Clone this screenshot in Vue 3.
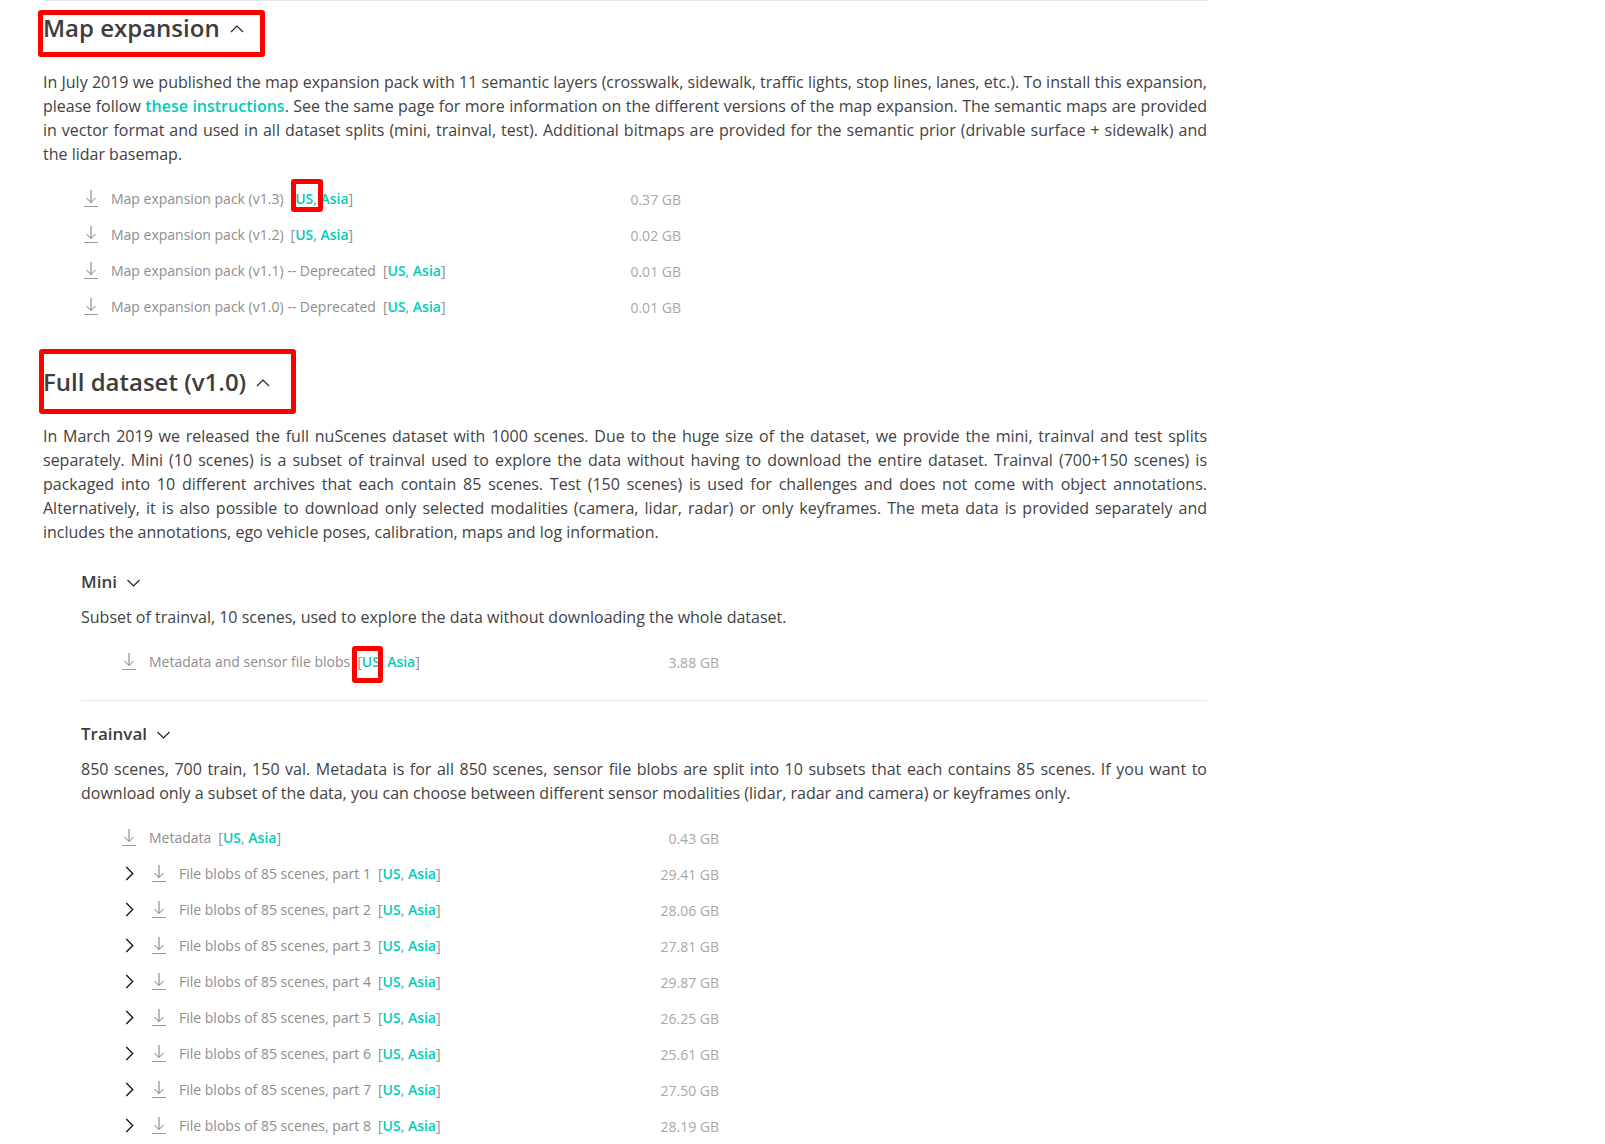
<script setup>
const mapRows = [
  { label: 'Map expansion pack (v1.3)', size: '0.37 GB', mark: true },
  { label: 'Map expansion pack (v1.2)', size: '0.02 GB' },
  { label: 'Map expansion pack (v1.1) -- Deprecated', size: '0.01 GB' },
  { label: 'Map expansion pack (v1.0) -- Deprecated', size: '0.01 GB' },
]
const sizes = ['29.41', '28.06', '27.81', '29.87', '26.25', '25.61', '27.50', '28.19']
const parts = sizes.map((s, i) => ({ label: `File blobs of 85 scenes, part ${i + 1}`, size: `${s} GB` }))
</script>

<template>
  <main class="page">
    <section class="first">
      <h2 class="title">
        Map expansion
        <svg class="caret" viewBox="0 0 14 8"><path d="M1 7l6-6 6 6" /></svg>
        <span class="mark mark-a"></span>
      </h2>
      <p class="text">In July 2019 we published the map expansion pack with 11 semantic layers (crosswalk, sidewalk, traffic lights, stop lines, lanes, etc.). To install this expansion, please follow <a>these instructions</a>. See the same page for more information on the different versions of the map expansion. The semantic maps are provided in vector format and used in all dataset splits (mini, trainval, test). Additional bitmaps are provided for the semantic prior (drivable surface + sidewalk) and the lidar basemap.</p>
      <ul class="rows">
        <li v-for="r in mapRows" :key="r.label" class="row">
          <span class="name">
            <svg class="dl" viewBox="0 0 14 17"><path d="M7 0v12.5M2.5 8l4.5 4.5L11.5 8" /><path class="base" d="M0 16.5h14" /></svg>
            <span class="label">{{ r.label }}</span>
            <span class="links">[<span class="hold"><a>US</a>,<span v-if="r.mark" class="mark mark-b"></span></span> <a>Asia</a>]</span>
          </span>
          <span class="size">{{ r.size }}</span>
        </li>
      </ul>
    </section>

    <section class="second">
      <h2 class="title">
        Full dataset (v1.0)
        <svg class="caret" viewBox="0 0 14 8"><path d="M1 7l6-6 6 6" /></svg>
        <span class="mark mark-c"></span>
      </h2>
      <p class="text">In March 2019 we released the full nuScenes dataset with 1000 scenes. Due to the huge size of the dataset, we provide the mini, trainval and test splits separately. Mini (10 scenes) is a subset of trainval used to explore the data without having to download the entire dataset. Trainval (700+150 scenes) is packaged into 10 different archives that each contain 85 scenes. Test (150 scenes) is used for challenges and does not come with object annotations. Alternatively, it is also possible to download only selected modalities (camera, lidar, radar) or only keyframes. The meta data is provided separately and includes the annotations, ego vehicle poses, calibration, maps and log information.</p>

      <div class="sub mini">
        <h3 class="subtitle">Mini <svg class="caret small" viewBox="0 0 14 8"><path d="M1 1l6 6 6-6" /></svg></h3>
        <p class="text">Subset of trainval, 10 scenes, used to explore the data without downloading the whole dataset.</p>
        <ul class="rows">
          <li class="row">
            <span class="name">
              <svg class="dl" viewBox="0 0 14 17"><path d="M7 0v12.5M2.5 8l4.5 4.5L11.5 8" /><path class="base" d="M0 16.5h14" /></svg>
              <span class="label">Metadata and sensor file blobs</span>
              <span class="links">[<span class="hold"><a>US</a>,<span class="mark mark-d"></span></span> <a>Asia</a>]</span>
            </span>
            <span class="size">3.88 GB</span>
          </li>
        </ul>
      </div>

      <div class="sub trainval">
        <h3 class="subtitle">Trainval <svg class="caret small" viewBox="0 0 14 8"><path d="M1 1l6 6 6-6" /></svg></h3>
        <p class="text">850 scenes, 700 train, 150 val. Metadata is for all 850 scenes, sensor file blobs are split into 10 subsets that each contains 85 scenes. If you want to download only a subset of the data, you can choose between different sensor modalities (lidar, radar and camera) or keyframes only.</p>
        <ul class="rows">
          <li class="row">
            <span class="name">
              <svg class="dl" viewBox="0 0 14 17"><path d="M7 0v12.5M2.5 8l4.5 4.5L11.5 8" /><path class="base" d="M0 16.5h14" /></svg>
              <span class="label">Metadata</span>
              <span class="links">[<a>US</a>, <a>Asia</a>]</span>
            </span>
            <span class="size">0.43 GB</span>
          </li>
          <li v-for="r in parts" :key="r.label" class="row">
            <span class="name">
              <svg class="chev" viewBox="0 0 8 14"><path d="M1 1l6 6-6 6" /></svg>
              <svg class="dl" viewBox="0 0 14 17"><path d="M7 0v12.5M2.5 8l4.5 4.5L11.5 8" /><path class="base" d="M0 16.5h14" /></svg>
              <span class="label">{{ r.label }}</span>
              <span class="links">[<a>US</a>, <a>Asia</a>]</span>
            </span>
            <span class="size">{{ r.size }}</span>
          </li>
        </ul>
      </div>
    </section>
  </main>
</template>

<style>
html, body { background: #fff; }
</style>

<style scoped>
.page {
  width: 1207px;
  height: 1144px;
  padding-left: 43px;
  overflow: hidden;
  box-sizing: border-box;
  font-family: "Open Sans", sans-serif;
  color: #3d3d3d;
}
.first { padding-top: 10px; border-top: 1px solid #e6e6e6; }
.first > .text { padding-top: 26px; }
.second { padding-top: 41px; }
.title {
  position: relative;
  display: table;
  margin: 0;
  font-size: 24px;
  line-height: 33px;
  font-weight: 600;
  color: #3d3d3d;
}
.caret {
  width: 14px;
  height: 8px;
  margin-left: 4px;
  vertical-align: 4px;
  fill: none;
  stroke: #222;
  stroke-width: 1.2;
}
.caret.small { width: 15px; margin-left: 5px; vertical-align: 1px; }
.text {
  margin: 0;
  font-size: 16px;
  line-height: 24px;
  text-align: justify;
  color: #424242;
}
.second > .text { padding-top: 26px; }
a { color: #00cdb8; font-weight: 600; }
.rows {
  list-style: none;
  margin: 0;
  padding: 14px 0 0 41px;
}
.row {
  display: flex;
  justify-content: space-between;
  align-items: center;
  width: 597px;
  height: 36px;
  font-size: 14px;
  color: #8e8e8e;
}
.name { display: flex; align-items: center; white-space: pre; }
.label { margin-left: 13px; }
.links { margin-left: 7px; color: #8e8e8e; }
.hold { position: relative; display: inline-block; }
.size { color: #a8a8a8; position: relative; top: 1px; }
.dl {
  width: 14px;
  height: 17px;
  fill: none;
  stroke: #777;
  stroke-width: 1;
}
.dl .base { stroke: #999; }
.chev {
  width: 9px;
  height: 15px;
  margin-right: 18px;
  margin-left: 3px;
  fill: none;
  stroke: #111;
  stroke-width: 1.2;
}
.sub { margin-left: 38px; }
.mini { padding-top: 26px; padding-bottom: 21px; border-bottom: 1px solid #e8e8e8; }
.trainval { padding-top: 21px; }
.subtitle {
  margin: 0;
  font-size: 17px;
  line-height: 24px;
  font-weight: 600;
  color: #3d3d3d;
}
.sub .text { padding-top: 11px; }
.mark {
  position: absolute;
  box-sizing: border-box;
  border: 5px solid #f00;
  border-radius: 3px;
}
.mark-a { left: -5px; top: -1px; width: 227px; height: 47px; }
.mark-b { left: -4px; top: -10px; width: 32px; height: 33px; }
.mark-c { left: -4px; top: -16px; width: 257px; height: 65px; }
.mark-d { left: -10px; top: -6px; width: 31px; height: 37px; }
</style>
